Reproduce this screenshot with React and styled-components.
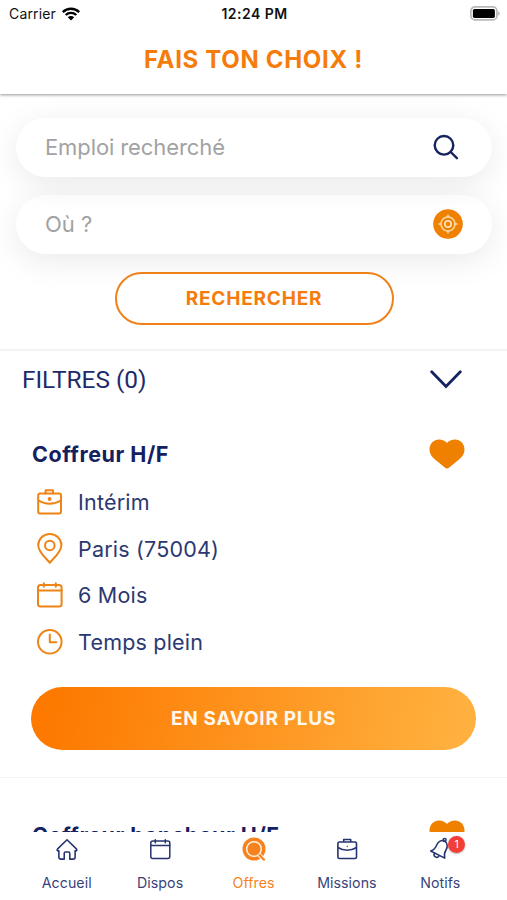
import React from 'react';
import styled, { createGlobalStyle } from 'styled-components';

const GlobalStyle = createGlobalStyle`
  * {
    box-sizing: border-box;
  }
  body {
    margin: 0;
    background-color: #fff;
    font-family: Inter, "Liberation Sans", sans-serif;
  }
`;

const Screen = styled.div`
  display: flex;
  flex-direction: column;
  width: 507px;
  height: 900px;
  overflow: hidden;
  background-color: #fff;
  color: #16235f;
`;

const Header = styled.header`
  position: relative;
  z-index: 2;
  flex: none;
  height: 94px;
  background-color: #fff;
  box-shadow: 0 1px 3px rgba(0, 0, 0, 0.42);
`;

const StatusBar = styled.div`
  display: grid;
  grid-template-columns: 1fr auto 1fr;
  align-items: center;
  height: 27px;
  padding: 0 7px 0 9px;
  font-size: 14px;
  color: #111;
`;

const Carrier = styled.div`
  display: flex;
  align-items: center;
  gap: 6px;
  letter-spacing: 0.15px;
`;

const Time = styled.span`
  font-weight: 600;
  font-size: 14px;
  letter-spacing: 0.45px;
`;

const Battery = styled.svg`
  justify-self: end;
`;

const Title = styled.h1`
  margin: 0;
  height: 66px;
  line-height: 66px;
  text-align: center;
  font-size: 24px;
  font-weight: 700;
  letter-spacing: 0.68px;
  color: #f57c0b;
`;

const Content = styled.main`
  flex: 1;
  min-height: 0;
  overflow: hidden;
`;

const SearchPanel = styled.section`
  display: flex;
  flex-direction: column;
  align-items: center;
  height: 257px;
  padding: 24px 15px 0 16px;
  border-bottom: 2px solid #f4f4f4;
`;

const Field = styled.div`
  position: relative;
  z-index: 1;
  display: flex;
  align-items: center;
  justify-content: space-between;
  width: 100%;
  height: 59px;
  margin-bottom: 18px;
  padding: 0 29px 1px;
  border-radius: 30px;
  background-color: #fff;
  box-shadow: 0 7px 32px rgba(0, 0, 0, 0.085);
  font-size: 22px;
  letter-spacing: -0.1px;
  color: #a2a2a2;

  & + & {
    z-index: 0;
    letter-spacing: 0;
  }
`;

const FieldIcon = styled.span`
  display: flex;
  padding-right: 4px;
`;

const SearchButton = styled.button`
  position: relative;
  width: 279px;
  height: 53px;
  padding: 0;
  border: 2px solid #f08019;
  border-radius: 27px;
  background-color: #fff;
  font: 700 19px Inter, sans-serif;
  letter-spacing: 0.8px;
  color: #f57c0b;
`;

const Filters = styled.div`
  display: flex;
  align-items: center;
  justify-content: space-between;
  height: 46px;
  padding: 10px 45px 0 22px;
  font-family: Roboto, sans-serif;
  font-size: 24.4px;
  color: #1d2b69;
`;

const Card = styled.article`
  height: 381px;
  padding: 35px 31px 0;
  border-bottom: 1px solid #f4f4f4;
`;

const CardHeader = styled.div`
  display: flex;
  align-items: center;
  justify-content: space-between;
  height: 43px;
  padding: 0 11px 0 1px;
`;

const CardTitle = styled.h2`
  margin: 1px 0 0;
  font-size: 21.5px;
  font-weight: 700;
  letter-spacing: 0.53px;
  color: #14205f;
`;

const Details = styled.ul`
  margin: 4px 0 0;
  padding: 0 0 0 6px;
  list-style: none;
`;

const Detail = styled.li`
  display: flex;
  align-items: center;
  gap: 15px;
  height: 46.5px;
  font-size: 21.5px;
  letter-spacing: 0.2px;
  color: #2b3871;
`;

const MoreButton = styled.button`
  display: block;
  width: 100%;
  height: 63px;
  margin-top: 22px;
  padding: 0;
  border: 0;
  border-radius: 32px;
  background: linear-gradient(100deg, #fd7900 5%, #ffb03e 95%);
  font: 700 19px Inter, sans-serif;
  letter-spacing: 0.72px;
  color: #fff8ee;
`;

const TabBar = styled.nav`
  display: flex;
  flex: none;
  position: relative;
  height: 68px;
  padding: 0 20px;
  background-color: #fff;
`;

const Tab = styled.div`
  position: relative;
  display: flex;
  flex: 1;
  flex-direction: column;
  align-items: center;
  padding-top: 5px;
  font-size: 14.2px;
  line-height: 18px;
  letter-spacing: 0.05px;
  color: ${({ $active }) => ($active ? '#f5821f' : '#38447a')};

  svg {
    margin-bottom: 13px;
  }
`;

const Badge = styled.span`
  position: absolute;
  top: 4px;
  left: 54.5px;
  width: 17px;
  height: 17px;
  border-radius: 50%;
  background-color: #f43d36;
  box-shadow: 0 1px 2px rgba(0, 0, 0, 0.3);
  font-size: 10.5px;
  line-height: 17px;
  letter-spacing: 0;
  text-align: center;
  color: #fff;
`;

const Icon = ({ size = 26, width = 2, color = '#ee8415', children }) => (
  <svg
    width={size}
    height={size}
    viewBox="0 0 26 26"
    fill="none"
    stroke={color}
    strokeWidth={width}
    strokeLinecap="round"
    strokeLinejoin="round"
  >
    {children}
  </svg>
);

const Briefcase = (props) => (
  <Icon {...props}>
    <rect x="1.2" y="4.5" width="22.8" height="20" rx="2" />
    <path d="M8.600 4.5V1.2h7.400v3.300M1.500 11.500c3.500 2.200 7.500 3.300 11.200 3.300s7.700-1.100 11.200-3.300" />
    <circle cx="12.600" cy="10" r="0.900" fill="#ee8415" />
  </Icon>
);

const Calendar = (props) => (
  <Icon {...props}>
    <rect x="1" y="3" width="23.600" height="21.500" rx="2.500" />
    <path d="M1 8.500h23.600M6.800 1.200v3.600M18.800 1.200v3.600" />
  </Icon>
);

const Clock = () => (
  <Icon>
    <circle cx="12.800" cy="12.800" r="11.800" />
    <path d="M12.800 5.500v7.800h6.500" />
  </Icon>
);

const Pin = () => (
  <svg width="26" height="31" viewBox="0 0 26 31" fill="none" stroke="#ee8415" strokeWidth="2" strokeLinejoin="round">
    <path d="M12.800 29.800C10 26 1.200 19.500 1.200 12.300a11.600 11.300 0 0 1 23.200 0C24.400 19.500 15.600 26 12.800 29.800z" />
    <circle cx="12.800" cy="12.500" r="4.800" />
  </svg>
);

const Heart = () => (
  <svg width="36" height="30" viewBox="0 0 36 30">
    <path
      d="M18 29.500c-.8 0-1.500-.5-2.200-1L6 20.600C2.500 17.500.5 14.500.5 10.500.5 4.800 4.700.6 10 .6c3.300 0 6.200 1.300 8 3.400C19.800 1.900 22.700.6 26 .6c5.300 0 9.500 4.200 9.500 9.900 0 4-2 7-5.500 10.100l-9.800 7.900c-.7.500-1.400 1-2.200 1z"
      fill="#f08000"
    />
  </svg>
);

const SearchIcon = () => (
  <svg width="26" height="26" viewBox="0 0 26 26" fill="none" stroke="#14235f" strokeWidth="2.400" strokeLinecap="round">
    <circle cx="11" cy="11.300" r="9.300" />
    <path d="M17.700 18l6.200 6.200" />
  </svg>
);

const Locate = () => (
  <svg width="30" height="30" viewBox="0 0 30 30" fill="none" stroke="#ffdfb0" strokeWidth="1.400">
    <circle cx="15" cy="15" r="14.800" fill="#ef8000" stroke="none" />
    <circle cx="15" cy="15" r="7" />
    <circle cx="15" cy="15" r="3.200" strokeWidth="1.700" />
    <path d="M15 5.500V9M15 21v3.500M5.500 15H9M21 15h3.500" />
  </svg>
);

const details = (job) => [
  { icon: <Briefcase />, text: job.contract },
  { icon: <Pin />, text: job.place },
  { icon: <Calendar />, text: job.duration },
  { icon: <Clock />, text: job.time },
];

const jobs = [
  { title: 'Coffreur H/F', contract: 'Intérim', place: 'Paris (75004)', duration: '6 Mois', time: 'Temps plein' },
  { title: 'Coffreur bancheur H/F', contract: 'Intérim', place: 'Paris (75004)', duration: '6 Mois', time: 'Temps plein' },
];

function JobCard({ job, preview }) {
  return (
    <Card>
      <CardHeader>
        <CardTitle>{job.title}</CardTitle>
        <Heart />
      </CardHeader>
      {!preview && (
        <>
          <Details>
            {details(job).map(({ icon, text }) => (
              <Detail key={text}>
                {icon}
                {text}
              </Detail>
            ))}
          </Details>
          <MoreButton>EN SAVOIR PLUS</MoreButton>
        </>
      )}
    </Card>
  );
}

function Tabs() {
  const navy = '#25346e';
  return (
    <TabBar>
      <Tab>
        <Icon size={24} width={1.7} color={navy}>
          <path d="M2.600 13.200L13 3l10.400 10.200c.7.800.1 1.800-1 1.800h-.6v6.700c0 1.500-.8 2.300-2.300 2.300H16v-6.300c0-1-.5-1.500-1.500-1.500h-3c-1 0-1.500.5-1.500 1.500V24H6.500c-1.500 0-2.300-.8-2.300-2.300V15h-.6c-1.100 0-1.700-1-1-1.800z" />
        </Icon>
        Accueil
      </Tab>
      <Tab>
        <svg width="24" height="24" viewBox="0 0 24 24" fill="none" stroke={navy} strokeWidth="1.500" strokeLinecap="round">
          <rect x="2.800" y="4" width="19" height="17.500" rx="2" />
          <path d="M2.800 8.500h19M7.300 2.800v3M17.300 2.800v3" />
        </svg>
        Dispos
      </Tab>
      <Tab $active>
        <svg width="24" height="24" viewBox="0 0 24 24" fill="none">
          <circle cx="12" cy="12" r="11.500" fill="#f5821f" />
          <circle cx="12" cy="12" r="7.300" stroke="#fff3df" strokeWidth="1.500" />
          <path d="M16.500 17l5.500 5.800" stroke="#fff3df" strokeWidth="4" />
          <path d="M17.500 18l4.500 4.700" stroke="#f5821f" strokeWidth="2" strokeLinecap="round" />
        </svg>
        Offres
      </Tab>
      <Tab>
        <svg width="24" height="24" viewBox="0 0 24 24" fill="none" stroke={navy} strokeWidth="1.600" strokeLinejoin="round">
          <rect x="2.900" y="5" width="18.600" height="16.500" rx="1.500" />
          <path d="M8.700 5V2.500h7V5M2.900 10.500c2.800 1.800 6 2.700 9.300 2.700s6.500-.9 9.300-2.700" />
          <circle cx="12.200" cy="9.400" r="0.300" strokeWidth="1" />
        </svg>
        Missions
      </Tab>
      <Tab>
        <svg width="24" height="24" viewBox="0 0 24 24" fill="none" stroke={navy} strokeWidth="1.500" strokeLinecap="round" strokeLinejoin="round">
          <path d="M2.700 14c3.500-1.300 5-3.200 6-6 1.300-3.600 5-5.600 8-3.800 2.800 1.600 3.300 5.600 1.300 8.800-1.600 2.600-2 4.900-1.300 8.200z" />
          <circle cx="16.600" cy="3" r="1.500" />
          <path d="M6.300 16.500c-.6 1.400-.1 2.700 1.100 3.400 1.200.7 2.700.4 3.500-.8" />
        </svg>
        Notifs
        <Badge>1</Badge>
      </Tab>
    </TabBar>
  );
}

function App() {
  return (
    <Screen>
      <GlobalStyle />
      <Header>
        <StatusBar>
          <Carrier>
            Carrier
            <svg width="18" height="14" viewBox="0 0 18 14" fill="none" stroke="#000" strokeWidth="2.300">
              <path d="M.8 5.100a11.700 11.700 0 0 1 16.400 0M3.700 8a7.600 7.600 0 0 1 10.600 0" />
              <path d="M9 13.600L5.800 10.300a4.600 4.600 0 0 1 6.400 0z" fill="#000" stroke="none" />
            </svg>
          </Carrier>
          <Time>12:24 PM</Time>
          <Battery width="30" height="15" viewBox="0 0 30 15">
            <rect x="0.900" y="0.900" width="26" height="13" rx="4" fill="#fff" stroke="#b9b9b9" strokeWidth="1.700" />
            <rect x="2.900" y="2.900" width="22" height="9" rx="1.600" fill="#000" />
            <path d="M28.200 5.200c2 .9 2 3.700 0 4.600z" fill="#b5b5b5" />
          </Battery>
        </StatusBar>
        <Title>FAIS TON CHOIX !</Title>
      </Header>
      <Content>
        <SearchPanel>
          <Field>
            Emploi recherché
            <FieldIcon>
              <SearchIcon />
            </FieldIcon>
          </Field>
          <Field>
            Où ?
            <Locate />
          </Field>
          <SearchButton>RECHERCHER</SearchButton>
        </SearchPanel>
        <Filters>
          FILTRES (0)
          <svg width="32" height="19" viewBox="0 0 32 19" fill="none" stroke="#14235f" strokeWidth="2.800" strokeLinecap="round">
            <path d="M1.700 1.700L16 16.500 30.300 1.700" />
          </svg>
        </Filters>
        {jobs.map((job, index) => (
          <JobCard key={job.title} job={job} preview={index > 0} />
        ))}
      </Content>
      <Tabs />
    </Screen>
  );
}

export default App;
